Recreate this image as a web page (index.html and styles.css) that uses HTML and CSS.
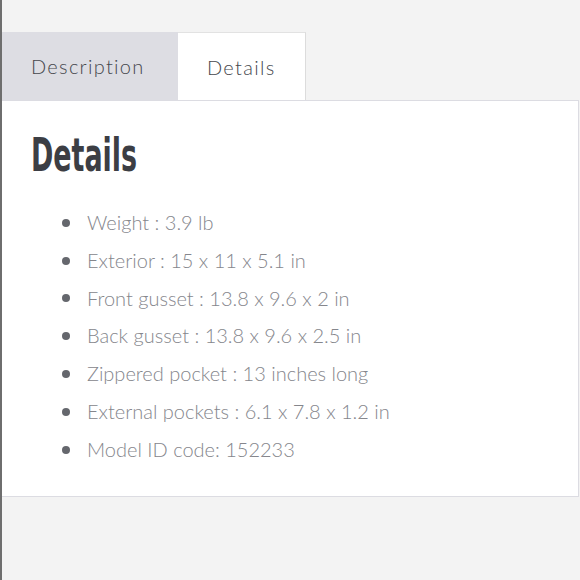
FILE: index.html
```html
<!DOCTYPE html>
<html lang="en">
<head>
<meta charset="utf-8">
<title>Details</title>
<link rel="stylesheet" href="styles.css">
</head>
<body>
<div class="page">
  <div class="tabs">
    <div class="tab tab-inactive">Description</div>
    <div class="tab tab-active">Details</div>
  </div>
  <div class="panel">
    <h2 class="panel-title">Details</h2>
    <ul class="spec-list">
      <li>Weight : 3.9 lb</li>
      <li>Exterior : 15 x 11 x 5.1 in</li>
      <li>Front gusset : 13.8 x 9.6 x 2 in</li>
      <li>Back gusset : 13.8 x 9.6 x 2.5 in</li>
      <li>Zippered pocket : 13 inches long</li>
      <li>External pockets : 6.1 x 7.8 x 1.2 in</li>
      <li>Model ID code: 152233</li>
    </ul>
  </div>
</div>
</body>
</html>
```
FILE: styles.css
```css
html, body {
  margin: 0;
  padding: 0;
  background: #f3f3f3;
}

.page {
  box-sizing: border-box;
  height: 580px;
  border-left: 2px solid #6e6e6e;
  padding-top: 32px;
  padding-right: 1px;
}

.tabs {
  display: flex;
  height: 68px;
}

.tab {
  box-sizing: border-box;
  display: flex;
  align-items: center;
  font-family: "Lato", "Open Sans", sans-serif;
  font-weight: 300;
  font-size: 20px;
  letter-spacing: 1.3px;
  color: #45474d;
}

.tab-inactive {
  width: 176px;
  padding-left: 29px;
  background: #dddde3;
}

.tab-active {
  width: 128px;
  padding-left: 29px;
  background: #ffffff;
  border-top: 1px solid #e2e2e2;
  border-right: 1px solid #dcdcdc;
}

.panel {
  box-sizing: border-box;
  height: 397px;
  background: #ffffff;
  border: 1px solid #dcdce2;
  border-left: none;
  padding: 24px 0 0 29px;
}

.panel-title {
  margin: 0;
  font-family: "DejaVu Sans Condensed", "DejaVu Sans", sans-serif;
  font-weight: bold;
  font-size: 46px;
  line-height: 60px;
  color: #3c3e44;
  transform: scaleX(0.65);
  transform-origin: left center;
}

.spec-list {
  margin: 19px 0 0 0;
  padding-left: 56px;
  list-style: none;
  font-family: "Lato", sans-serif;
  font-weight: 300;
  font-size: 20px;
  color: #85868c;
}

.spec-list li {
  display: flex;
  align-items: center;
  gap: 17px;
  line-height: 37.8px;
  margin-left: -25px;
}

.spec-list li::before {
  content: "";
  width: 8px;
  height: 8px;
  border-radius: 50%;
  background: #65676d;
  flex: none;
}
```
